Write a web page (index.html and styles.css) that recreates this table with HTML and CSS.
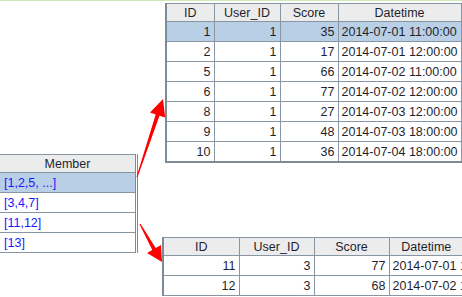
FILE: index.html
```html
<!DOCTYPE html>
<html>
<head>
<meta charset="utf-8">
<link rel="stylesheet" href="styles.css">
</head>
<body>
<div class="canvas">
  <div class="topline"></div>
  <table class="grid top">
    <colgroup><col class="c-id"><col class="c-uid"><col class="c-score"><col class="c-dt"></colgroup>
    <thead><tr><th>ID</th><th>User_ID</th><th>Score</th><th>Datetime</th></tr></thead>
    <tbody>
      <tr class="sel"><td class="num">1</td><td class="num">1</td><td class="num">35</td><td>2014-07-01 11:00:00</td></tr>
      <tr><td class="num">2</td><td class="num">1</td><td class="num">17</td><td>2014-07-01 12:00:00</td></tr>
      <tr><td class="num">5</td><td class="num">1</td><td class="num">66</td><td>2014-07-02 11:00:00</td></tr>
      <tr><td class="num">6</td><td class="num">1</td><td class="num">77</td><td>2014-07-02 12:00:00</td></tr>
      <tr><td class="num">8</td><td class="num">1</td><td class="num">27</td><td>2014-07-03 12:00:00</td></tr>
      <tr><td class="num">9</td><td class="num">1</td><td class="num">48</td><td>2014-07-03 18:00:00</td></tr>
      <tr><td class="num">10</td><td class="num">1</td><td class="num">36</td><td>2014-07-04 18:00:00</td></tr>
    </tbody>
  </table>
  <table class="grid member">
    <thead><tr><th>Member</th></tr></thead>
    <tbody>
      <tr class="sel"><td class="link">[1,2,5, ...]</td></tr>
      <tr><td class="link">[3,4,7]</td></tr>
      <tr><td class="link">[11,12]</td></tr>
      <tr><td class="link">[13]</td></tr>
    </tbody>
  </table>
  <table class="grid bottom">
    <colgroup><col class="b-id"><col class="b-uid"><col class="b-score"><col class="b-dt"></colgroup>
    <thead><tr><th>ID</th><th>User_ID</th><th>Score</th><th>Datetime</th></tr></thead>
    <tbody>
      <tr><td class="num">11</td><td class="num">3</td><td class="num">77</td><td class="clip">2014-07-01 11:00:00</td></tr>
      <tr><td class="num">12</td><td class="num">3</td><td class="num">68</td><td class="clip">2014-07-02 12:00:00</td></tr>
    </tbody>
  </table>
  <svg class="arrows" width="462" height="297" viewBox="0 0 462 297">
    <polygon fill="#f00" points="137.5,177.2 159.5,115.7 165.2,117.6 163,99 150,112.6 155.7,114.5 136.5,176.8"/>
    <polygon fill="#f00" points="140.5,223.7 155.7,248 161,245 162,262 147,253 152.3,250 139.5,224.3"/>
  </svg>
</div>
</body>
</html>
```
FILE: styles.css
```css
html, body {
  margin: 0;
  padding: 0;
  background: #fff;
}
.canvas {
  position: relative;
  width: 462px;
  height: 297px;
  overflow: hidden;
  font-family: "Liberation Sans", Arial, sans-serif;
  font-size: 12.5px;
  color: #1f1f2f;
}
.topline {
  height: 1px;
  background: #cfe8bd;
}
.grid {
  border-collapse: collapse;
  table-layout: fixed;
  border: 1px solid #7d8a97;
}
.grid th, .grid td {
  border: 1px solid #8896a3;
  padding: 0 3px;
  white-space: nowrap;
  overflow: hidden;
}
.grid th {
  background: #ececec;
  font-weight: normal;
  height: 17px;
  text-align: center;
}
.grid td {
  height: 19px;
}
.grid .num {
  text-align: right;
}
.grid tr.sel td {
  background: #b9cfe5;
}
.top {
  margin: 2px 0 0 165px;
  width: 295px;
  border-left: 2px solid #7d8a97;
  border-bottom: 2px solid #7d8a97;
}
.c-id { width: 48px; }
.c-uid { width: 66px; }
.c-score { width: 58px; }
.c-dt { width: 123px; }
.member {
  margin: -9px 0 0 0;
  width: 138px;
  border-right: 3px double #7d8a97;
  border-left: none;
}
.member th:first-child, .member td:first-child {
  border-left: none;
}
.member .link {
  color: #1a1aff;
  padding-left: 4px;
}
.bottom {
  margin: -16px 0 0 162px;
  width: 300px;
  border-left: 2px solid #7d8a97;
  border-right: none;
}
.bottom th:last-child, .bottom td:last-child {
  border-right: none;
}
.b-id { width: 76px; }
.b-uid { width: 75px; }
.b-score { width: 75px; }
.b-dt { width: 74px; }
.clip {
  text-overflow: clip;
}
.arrows {
  position: absolute;
  left: 0;
  top: 0;
}
```
